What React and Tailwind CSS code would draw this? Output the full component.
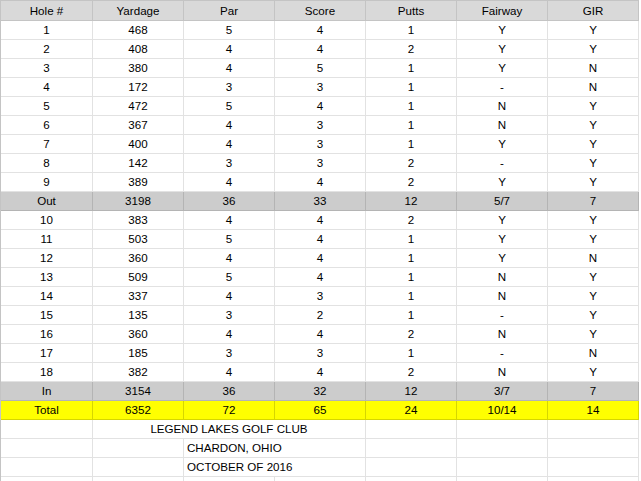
import React from "react";

const holes = [
  ["1", "468", "5", "4", "1", "Y", "Y"],
  ["2", "408", "4", "4", "2", "Y", "Y"],
  ["3", "380", "4", "5", "1", "Y", "N"],
  ["4", "172", "3", "3", "1", "-", "N"],
  ["5", "472", "5", "4", "1", "N", "Y"],
  ["6", "367", "4", "3", "1", "N", "Y"],
  ["7", "400", "4", "3", "1", "Y", "Y"],
  ["8", "142", "3", "3", "2", "-", "Y"],
  ["9", "389", "4", "4", "2", "Y", "Y"],
];

const back = [
  ["10", "383", "4", "4", "2", "Y", "Y"],
  ["11", "503", "5", "4", "1", "Y", "Y"],
  ["12", "360", "4", "4", "1", "Y", "N"],
  ["13", "509", "5", "4", "1", "N", "Y"],
  ["14", "337", "4", "3", "1", "N", "Y"],
  ["15", "135", "3", "2", "1", "-", "Y"],
  ["16", "360", "4", "4", "2", "N", "Y"],
  ["17", "185", "3", "3", "1", "-", "N"],
  ["18", "382", "4", "4", "2", "N", "Y"],
];

const header = ["Hole #", "Yardage", "Par", "Score", "Putts", "Fairway", "GIR"];

const tones = {
  head: "bg-[#d9d9d9] border-[#c4c4c4]",
  plain: "bg-white border-[#e2e2e2]",
  sub: "bg-[#cccccc] border-[#b4b4b4]",
  total: "bg-[#ffff00] border-[#d6d600]",
};

function Row({ cells, tone = "plain", tall = false }) {
  return (
    <>
      {cells.map((c, i) => (
        <div
          key={i}
          className={`${tall ? "h-[20px]" : "h-[19px]"} border-r border-b ${tones[tone]} flex items-center justify-center`}
        >
          {c}
        </div>
      ))}
    </>
  );
}

export default function App() {
  const cell = "h-[19px] border-r border-b border-[#e2e2e2] bg-white";
  return (
    <div className="w-[641px] h-[481px] overflow-hidden bg-white font-['Liberation_Sans',Arial,sans-serif] text-[11.6px] text-black">
      <div className="grid grid-cols-[92px_repeat(6,91px)] border-l border-t border-[#c4c4c4] w-fit">
        <Row cells={header} tone="head" tall />
        {holes.map((r) => (
          <Row key={r[0]} cells={r} />
        ))}
        <Row cells={["Out", "3198", "36", "33", "12", "5/7", "7"]} tone="sub" />
        {back.map((r) => (
          <Row key={r[0]} cells={r} />
        ))}
        <Row cells={["In", "3154", "36", "32", "12", "3/7", "7"]} tone="sub" />
        <Row cells={["Total", "6352", "72", "65", "24", "10/14", "14"]} tone="total" />

        {/* club info rows */}
        <div className={cell} />
        <div className={`${cell} col-span-3 flex items-center justify-center whitespace-nowrap`}>
          LEGEND LAKES GOLF CLUB
        </div>
        <div className={cell} />
        <div className={cell} />
        <div className={cell} />

        <div className={cell} />
        <div className={cell} />
        <div className={`${cell} col-span-2 flex items-center pl-[3px] whitespace-nowrap`}>
          CHARDON, OHIO
        </div>
        <div className={cell} />
        <div className={cell} />
        <div className={cell} />

        <div className={cell} />
        <div className={cell} />
        <div className={`${cell} col-span-2 flex items-center pl-[3px] whitespace-nowrap`}>
          OCTOBER OF 2016
        </div>
        <div className={cell} />
        <div className={cell} />
        <div className={cell} />

        {[0, 1, 2, 3, 4, 5, 6].map((i) => (
          <div key={i} className={cell} />
        ))}
      </div>
    </div>
  );
}
